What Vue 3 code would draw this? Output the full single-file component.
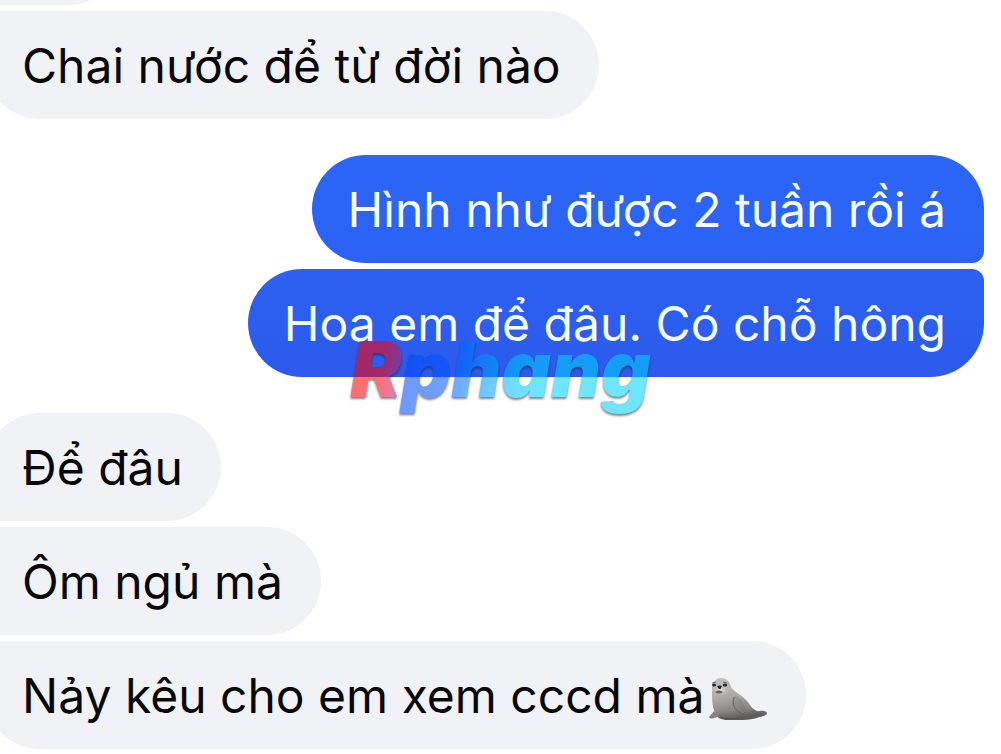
<script setup>
const groups = [
  { side: 'received', messages: [{ id: 1, text: '', earlier: true }, { id: 2, text: 'Chai nước để từ đời nào' }] },
  { side: 'sent', messages: [{ id: 3, text: 'Hình như được 2 tuần rồi á' }, { id: 4, text: 'Hoa em để đâu. Có chỗ hông' }] },
  {
    side: 'received',
    messages: [
      { id: 5, text: 'Để đâu' },
      { id: 6, text: 'Ôm ngủ mà' },
      { id: 7, text: 'Nảy kêu cho em xem cccd mà', seal: true },
    ],
  },
]
</script>

<template>
  <main class="chat">
    <section v-for="(group, i) in groups" :key="i" class="group" :class="group.side">
      <div v-for="m in group.messages" :key="m.id" class="bubble" :class="{ earlier: m.earlier }">
        <span>{{ m.text }}</span>
        <svg v-if="m.seal" class="seal" viewBox="0 0 59 44" role="img" aria-label="seal">
          <defs>
            <linearGradient id="fur" x1="0" y1="0" x2="0.2" y2="1">
              <stop offset="0" stop-color="#c4c3c2" />
              <stop offset="0.5" stop-color="#aaa8a7" />
              <stop offset="0.8" stop-color="#8b8988" />
              <stop offset="1" stop-color="#5f5d5c" />
            </linearGradient>
            <linearGradient id="flipper" x1="0" y1="0" x2="0.6" y2="1">
              <stop offset="0" stop-color="#a19f9e" />
              <stop offset="1" stop-color="#7b7978" />
            </linearGradient>
            <radialGradient id="cheek">
              <stop offset="0" stop-color="#dddcda" />
              <stop offset="1" stop-color="#c4c3c2" stop-opacity="0" />
            </radialGradient>
          </defs>
          <path d="M38 36C43 34 47 35 51 34C55 33 59 35 58 37C56 39 50 40 44 41C38 43 34 41 38 36Z" fill="#6d6b6a" />
          <path d="M3 13C3 5 7 1 12 1C18 1 21 5 22 10C24 14 31 17 36 22C41 27 43 32 48 34C52 36 55 37 57 38C50 40 45 43 34 43H19C12 43 8 41 6 36C3 29 3 21 3 13Z" fill="url(#fur)" />
          <path d="M5 34C3 37 0 39 0 41C3 42 7 41 10 39C8 38 6 36 5 34Z" fill="#858382" />
          <path d="M11 40C16 42 24 42 34 42" fill="none" stroke="#555352" stroke-width="1" />
          <path d="M25 20C23 27 25 33 32 36C36 38 37 35 36 31C35 26 31 21 27 19Z" fill="url(#flipper)" />
          <path d="M25 20C23 27 25 33 32 36C34 37 35 37 36 35" fill="none" stroke="#656362" stroke-width="1" />
          <ellipse cx="12" cy="13" rx="9" ry="6" fill="url(#cheek)" />
          <path d="M3 6L7 5M14 5L18 6" stroke="#686665" stroke-width="1" />
          <ellipse cx="5" cy="8" rx="2" ry="1.6" fill="#292827" />
          <ellipse cx="16" cy="8" rx="2.2" ry="1.6" fill="#292827" />
          <path d="M8 9Q11 8 13 9L11.500 12H10Z" fill="#242322" />
          <path d="M6 15Q10 12 14 15Q10 18 6 15Z" fill="#62605f" />
        </svg>
      </div>
    </section>
    <div class="watermark">Rphang</div>
  </main>
</template>

<style>
html,
body {
  background: #fff;
  overflow: hidden;
}
</style>

<style scoped>
.chat {
  position: relative;
  display: flex;
  flex-direction: column;
  gap: 36px;
  overflow: hidden;
  padding-bottom: 5px;
  font-family: Inter, "Noto Sans", sans-serif;
  font-size: 48px;
  line-height: 60px;
}
.group {
  display: flex;
  flex-direction: column;
  gap: 6px;
}
.received {
  align-items: flex-start;
  margin-left: -14px;
}
.sent {
  align-items: flex-end;
  margin-right: 17px;
}
.bubble {
  display: flex;
  align-items: center;
  box-sizing: border-box;
  min-height: 108px;
  padding: 25px 38px 23px 36px;
  border-radius: 54px;
  white-space: nowrap;
}
.received .bubble {
  background: #f1f2f6;
  color: #080809;
  border-top-left-radius: 12px;
  border-bottom-left-radius: 12px;
}
.received .bubble:first-child {
  border-top-left-radius: 54px;
}
.received .bubble:last-child {
  border-bottom-left-radius: 54px;
}
.sent .bubble {
  background: linear-gradient(#2c66f6, #2b62f4);
  color: #f6fcff;
}
.sent .bubble:first-child {
  border-bottom-right-radius: 12px;
}
.sent .bubble:last-child {
  background: linear-gradient(#2b61f2, #2c5aec);
  border-top-right-radius: 12px;
}
.bubble.earlier {
  width: 136px;
  margin-top: -103px;
}
.seal {
  width: 59px;
  height: 44px;
  margin-top: 6px;
  margin-left: 5px;
}
.watermark {
  position: absolute;
  top: 323px;
  left: 50%;
  transform: translateX(-50%);
  font-size: 77px;
  font-style: italic;
  font-weight: 900;
  line-height: 92px;
  padding: 0 8px;
  color: transparent;
  background: linear-gradient(101deg, #ff0000 14%, #c02060 19%, #0048ff 21%, #0058ff 35%, #0090ff 44%, #00c0ff 54%, #00d2ff 62%);
  background-clip: text;
  filter: drop-shadow(0 2px 1px #222);
  opacity: 0.56;
}
</style>
